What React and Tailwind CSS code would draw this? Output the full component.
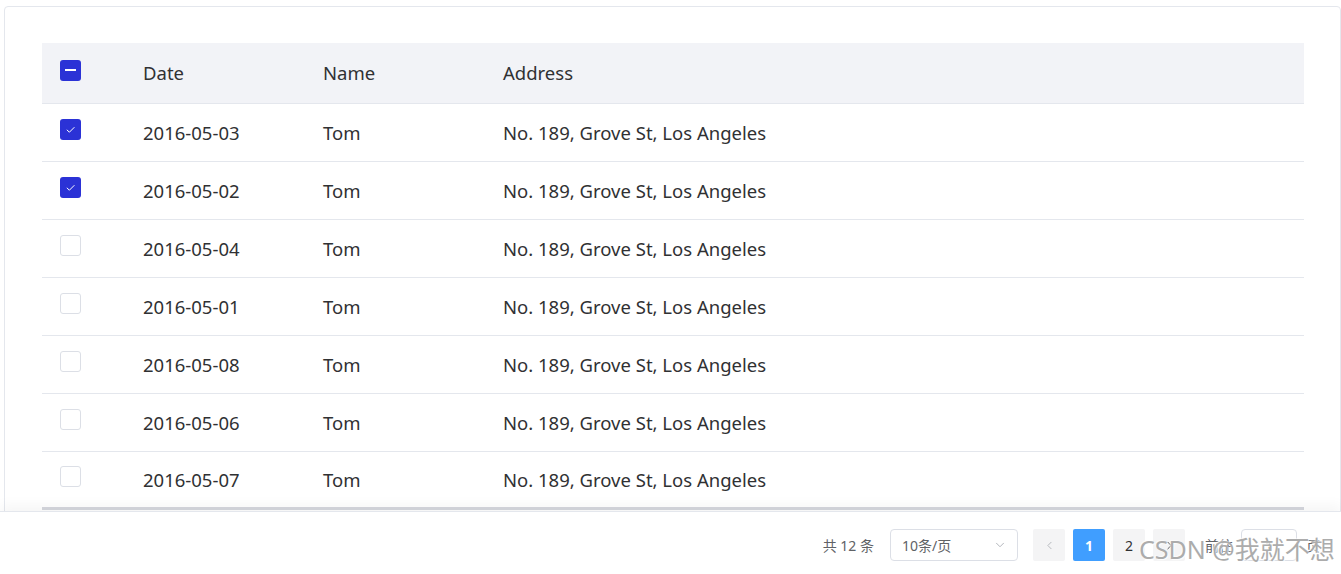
import { ChevronDown, ChevronLeft, ChevronRight } from "lucide-react";

const rows = [
  { date: "2016-05-03", checked: true },
  { date: "2016-05-02", checked: true },
  { date: "2016-05-04", checked: false },
  { date: "2016-05-01", checked: false },
  { date: "2016-05-08", checked: false },
  { date: "2016-05-06", checked: false },
  { date: "2016-05-07", checked: false },
];

function Checkbox({ state }) {
  if (state === "half") {
    return (
      <span className="mb-[6px] flex h-[21px] w-[21px] items-center justify-center rounded-[3px] bg-[#2b32d6]">
        <span className="h-[2px] w-[11px] bg-white" />
      </span>
    );
  }
  if (state === "on") {
    return (
      <span className="mb-[6px] flex h-[21px] w-[21px] items-center justify-center rounded-[3px] bg-[#2b32d6]">
        <svg width="13" height="13" viewBox="0 0 13 13" fill="none">
          <path d="M2.8 6.8 L5.4 9.2 L10.4 4.2" stroke="white" strokeWidth="1" />
        </svg>
      </span>
    );
  }
  return <span className="mb-[6px] block h-[21px] w-[21px] rounded-[3px] border border-[#dcdfe6] bg-white" />;
}

export default function App() {
  return (
    <div className="relative flex h-[574px] flex-col overflow-hidden bg-white font-['Noto_Sans','Noto_Sans_CJK_SC',sans-serif] text-[#303133]">
      <div className="min-h-0 flex-1 overflow-hidden pl-[4px] pt-[6px]">
        <div className="h-[620px] rounded-[4px] border border-[#e4e7ed] pl-[37px] pr-[36px] pt-[36px]">
          <div className="text-[18.5px]">
            <div className="grid h-[61px] grid-cols-[83px_180px_180px_1fr] items-center border-b border-[#e4e7ed] bg-[#f2f3f7]">
              <div className="flex items-center pl-[18px]">
                <Checkbox state="half" />
              </div>
              <div className="pl-[18px]">Date</div>
              <div className="pl-[18px]">Name</div>
              <div className="pl-[18px]">Address</div>
            </div>
            {rows.map((r, i) => (
              <div
                key={i}
                className={
                  "grid h-[58px] grid-cols-[83px_180px_180px_1fr] items-center " +
                  (i === rows.length - 1 ? "border-b-[3px] border-[#d5d7de]" : "border-b border-[#e4e7ed]")
                }
              >
                <div className="flex items-center pl-[18px]">
                  <Checkbox state={r.checked ? "on" : "off"} />
                </div>
                <div className="pl-[18px]">{r.date}</div>
                <div className="pl-[18px]">Tom</div>
                <div className="pl-[18px]">No. 189, Grove St, Los Angeles</div>
              </div>
            ))}
          </div>
        </div>
      </div>

      <div className="relative flex h-[63px] items-center justify-end border-t border-[#e4e7ed] bg-white pr-[21px] pt-[4px] text-[14px] text-[#606266] shadow-[0_-6px_12px_rgba(0,0,0,0.04)]">
        <span>共 12 条</span>
        <div className="ml-[16px] flex h-[32px] w-[128px] items-center justify-between rounded-[4px] border border-[#dcdfe6] pl-[11px] pr-[10px]">
          <span>10条/页</span>
          <ChevronDown size={14} strokeWidth={1.5} className="text-[#a8abb2]" />
        </div>
        <div className="ml-[15px] flex items-center gap-[8px]">
          <span className="flex h-[32px] w-[32px] items-center justify-center rounded-[2px] bg-[#f4f4f5] text-[#a8abb2]">
            <ChevronLeft size={13} strokeWidth={1.5} />
          </span>
          <span className="flex h-[32px] w-[32px] items-center justify-center rounded-[2px] bg-[#409eff] font-bold text-white">1</span>
          <span className="flex h-[32px] w-[32px] items-center justify-center rounded-[2px] bg-[#f4f4f5] text-[#303133]">2</span>
          <span className="flex h-[32px] w-[32px] items-center justify-center rounded-[2px] bg-[#f4f4f5] text-[#303133]">
            <ChevronRight size={13} strokeWidth={1.5} />
          </span>
        </div>
        <span className="ml-[20px]">前往</span>
        <div className="ml-[8px] flex h-[32px] w-[56px] items-center justify-center rounded-[4px] border border-[#dcdfe6] text-[#303133]">1</div>
        <span className="ml-[9px]">页</span>
        <span className="pointer-events-none absolute left-[1139px] top-[25px] text-[25px] leading-none text-[#acacac] [text-shadow:1px_1px_1px_rgba(255,255,255,0.9),-1px_-1px_1px_rgba(255,255,255,0.6)]">
          CSDN @我就不想
        </span>
      </div>
    </div>
  );
}
